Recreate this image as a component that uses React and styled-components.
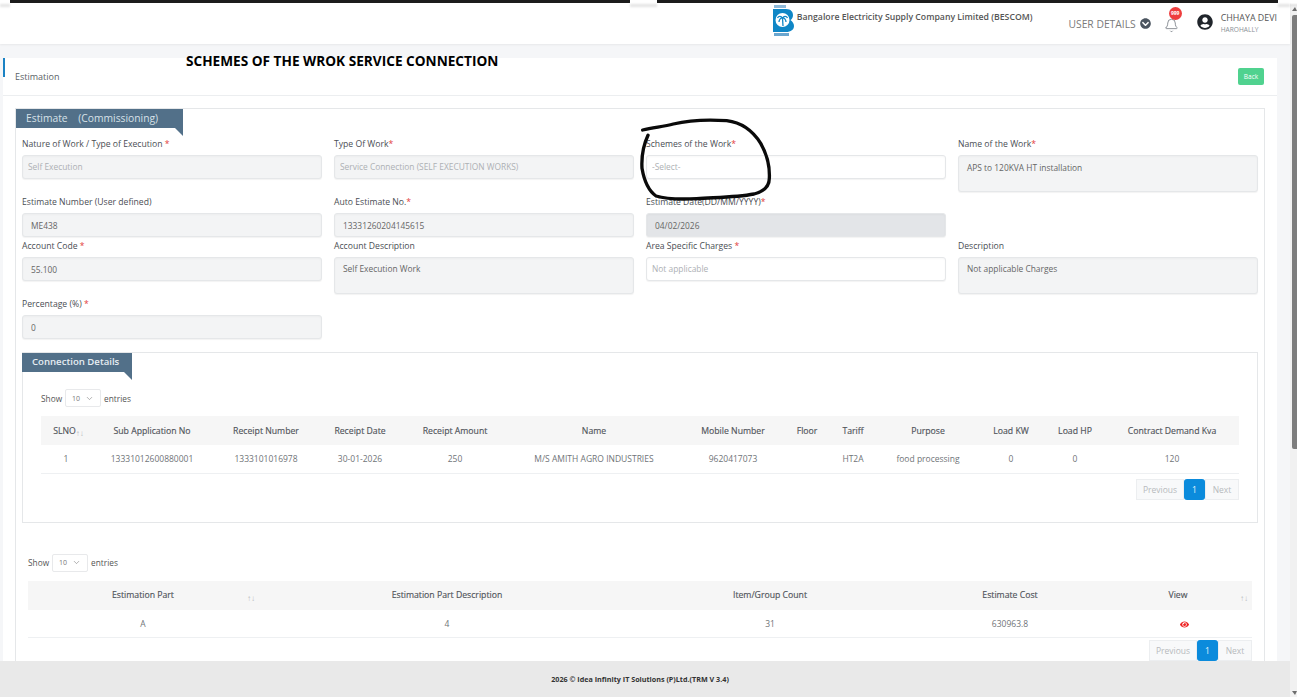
import styled, { createGlobalStyle } from 'styled-components';
import { Bell, ChevronDown } from 'lucide-react';
import { FaChevronCircleDown, FaEye, FaUserCircle } from 'react-icons/fa';

const GlobalStyle = createGlobalStyle`
	html, body {
		margin: 0;
		padding: 0;
		background: #fff;
		overflow: hidden;
	}
	* {
		box-sizing: border-box;
	}
	body {
		font-family: 'Open Sans', 'Noto Sans', 'Liberation Sans', sans-serif;
	}
`;

const Shell = styled.div`
	position: relative;
	display: flex;
	width: 1297px;
	height: 697px;
	overflow: hidden;
`;

const Content = styled.div`
	display: flex;
	flex-direction: column;
	width: 1290px;
	height: 100%;
`;

const Strip = styled.div`
	position: relative;
	z-index: 3;
	display: flex;
	flex: none;
	height: 3px;
	background: #1c1c1c;
`;

const StripGap = styled.div`
	position: relative;
	width: ${(p) => p.$w}px;
	margin-left: ${(p) => p.$left || 0}px;
	background: #fff;
	&::after {
		content: '';
		position: absolute;
		top: 4px;
		left: 0;
		width: 100%;
		height: 3px;
		background: #e4e4e4;
		filter: blur(1px);
	}
`;

const TopBar = styled.header`
	position: relative;
	z-index: 2;
	display: flex;
	flex: none;
	justify-content: flex-end;
	height: 41px;
	padding-right: 13px;
	background: #fff;
	box-shadow: 0 1px 2px rgba(0, 0, 0, 0.06);
`;

const Brand = styled.div`
	display: flex;
	align-items: flex-start;
	gap: 3px;
	margin-right: 36px;
	padding-top: 2px;
`;

const BrandName = styled.span`
	margin-top: 6px;
	font-size: 8.7px;
	font-weight: 600;
	line-height: 13px;
	color: #555;
	white-space: nowrap;
`;

const UserDetails = styled.div`
	display: flex;
	align-items: center;
	gap: 4px;
	height: 13px;
	margin-top: 14px;
	margin-right: 13px;
	font-size: 10.3px;
	color: #7a7a7a;
	svg {
		color: #4b5560;
	}
`;

const BellBox = styled.div`
	position: relative;
	width: 14px;
	height: 16px;
	margin-top: 13px;
	margin-right: 17px;
	color: #6a7078;
`;

const Badge = styled.span`
	position: absolute;
	top: -9px;
	left: 5px;
	width: 13px;
	height: 13px;
	border-radius: 50%;
	background: #ee3e3e;
	color: #fff;
	font-size: 5px;
	font-weight: 700;
	line-height: 13px;
	text-align: center;
`;

const Avatar = styled.div`
	display: flex;
	align-items: center;
	justify-content: center;
	width: 20px;
	height: 20px;
	margin-top: 9px;
	margin-right: 6px;
	border-radius: 50%;
	color: #20252b;
`;

const UserBlock = styled.div`
	padding-top: 8px;
`;

const UserName = styled.div`
	font-size: 8.9px;
	line-height: 13px;
	color: #555;
	white-space: nowrap;
`;

const UserPlace = styled.div`
	font-size: 6.6px;
	line-height: 11px;
	color: #8a8f96;
`;

const Main = styled.main`
	flex: 1;
	min-height: 0;
	padding: 14px 13px 0 3px;
	background: #f5f6f8;
	overflow: hidden;
`;

const Card = styled.section`
	position: relative;
	padding-bottom: 80px;
	background: #fff;
	&::before {
		content: '';
		position: absolute;
		top: 0;
		left: 0;
		width: 2px;
		height: 19px;
		background: #1a82c4;
	}
`;

const CardHead = styled.div`
	display: flex;
	align-items: flex-start;
	justify-content: space-between;
	height: 38px;
	padding: 10px 13px 0 12px;
	border-bottom: 1px solid #eceef0;
`;

const CardTitle = styled.h1`
	margin: 3px 0 0;
	font-size: 9px;
	font-weight: 400;
	line-height: 12px;
	color: #5a5f66;
`;

const BackButton = styled.button`
	width: 26px;
	height: 17px;
	padding: 0;
	border: none;
	border-radius: 2px;
	background: #50d28f;
	color: #fff;
	font-family: inherit;
	font-size: 6.5px;
`;

const Panel = styled.div`
	margin: 12px 12px 0;
	padding: 0 6px;
	border: 1px solid #e5e7e9;
`;

const Tag = styled.div`
	position: relative;
	width: ${(p) => p.$w}px;
	height: 19px;
	margin-left: ${(p) => p.$left}px;
	padding-left: ${(p) => p.$pad}px;
	background: #527089;
	color: ${(p) => p.$color};
	font-size: ${(p) => p.$size}px;
	font-weight: ${(p) => p.$weight};
	line-height: ${(p) => p.$line}px;
	white-space: pre;
	&::after {
		content: '';
		position: absolute;
		top: 19px;
		right: 0;
		border-top: 8px solid #527089;
		border-left: 8px solid transparent;
	}
`;

const FormGrid = styled.div`
	display: grid;
	grid-template-columns: repeat(4, 300px);
	align-items: start;
	column-gap: 12px;
	row-gap: 3px;
	margin-top: 9px;
`;

const Field = styled.div`
	display: flex;
	flex-direction: column;
	gap: ${(p) => (p.$tight ? 5 : 6)}px;
`;

const Label = styled.label`
	height: 12px;
	font-size: 8.65px;
	line-height: ${(p) => (p.$high ? 12 : 14)}px;
	color: #4a4e54;
	white-space: nowrap;
	b {
		font-weight: 400;
		color: #e23c3c;
	}
`;

const controlStyles = `
	width: 100%;
	border: 1px solid #e5e7e9;
	border-radius: 3px;
	font-family: inherit;
	font-size: 8.4px;
	outline: none;
	box-shadow: inset 0 1px 2px rgba(0, 0, 0, 0.03), 0 1px 1px rgba(0, 0, 0, 0.05);
`;

const Control = styled.input`
	${controlStyles}
	height: 24px;
	padding: 0 6px ${(p) => (p.$dark ? 0 : 2)}px ${(p) => (p.$dark ? 8 : 5)}px;
	background: ${(p) => (p.$plain ? '#fff' : p.$locked ? '#e3e5e8' : '#f3f4f5')};
	color: ${(p) => (p.$dark ? '#666' : '#adb0b4')};
`;

const TextBox = styled.textarea`
	${controlStyles}
	display: block;
	height: 37px;
	padding: ${(p) => (p.$high ? 5 : 6)}px 8px 0;
	background: #f3f4f5;
	color: #666;
	line-height: 12px;
	resize: none;
`;

const SubPanel = styled.div`
	margin: 13px 0 0;
	padding: 0 18px 22px;
	border: 1px solid #e5e7e9;
`;

const ShowRow = styled.div`
	display: flex;
	align-items: center;
	gap: 3px;
	height: 18px;
	margin-top: ${(p) => p.$top}px;
	margin-bottom: 9px;
	font-size: 8.3px;
	color: #555;
`;

const PageSize = styled.div`
	display: flex;
	align-items: center;
	justify-content: space-between;
	width: 36px;
	height: 18px;
	padding: 0 6px;
	border: 1px solid #e8e9eb;
	border-radius: 2px;
	font-size: 7px;
	color: #777;
`;

const Table = styled.table`
	width: 100%;
	border-collapse: collapse;
	table-layout: fixed;
`;

const HeadCell = styled.th`
	position: relative;
	height: 29px;
	padding: 0 ${(p) => p.$padRight || 0}px 0 ${(p) => p.$padLeft || 0}px;
	background: #f6f6f6;
	font-size: 8.7px;
	font-weight: 400;
	color: #50545a;
	text-align: center;
	-webkit-text-stroke: 0.15px #50545a;
	white-space: nowrap;
`;

const Cell = styled.td`
	height: 28px;
	padding: 0;
	border-bottom: 1px solid #eef0f2;
	font-size: 8.5px;
	color: #707478;
	text-align: center;
	white-space: nowrap;
`;

const SortMark = styled.span`
	position: relative;
	top: 2px;
	font-size: 8px;
	color: #b9bcbf;
	-webkit-text-stroke: 0;
`;

const SortCorner = styled(SortMark)`
	position: absolute;
	top: 11px;
	right: ${(p) => p.$right}px;
`;

const EyeIcon = styled(FaEye)`
	color: #ee2222;
	vertical-align: middle;
`;

const Pager = styled.div`
	display: flex;
	justify-content: flex-end;
	margin-top: ${(p) => p.$top}px;
`;

const PagerEnd = styled.span`
	display: flex;
	align-items: center;
	justify-content: center;
	width: ${(p) => p.$w}px;
	height: 21px;
	border: 1px solid #eceef0;
	background: #f8f9fa;
	font-size: 8.5px;
	color: #b7babd;
`;

const PagerCurrent = styled.span`
	display: flex;
	align-items: center;
	justify-content: center;
	width: 21px;
	height: 21px;
	border-radius: 3px;
	background: #0b8bdc;
	color: #e6f3fb;
	font-size: 8.5px;
`;

const LowerBlock = styled.div`
	padding: 0 6px;
`;

const Footer = styled.footer`
	position: relative;
	z-index: 2;
	flex: none;
	height: 36px;
	padding-right: 10px;
	background: #e9e9e9;
	font-size: 7.2px;
	font-weight: 700;
	line-height: 36px;
	color: #333;
	text-align: center;
`;

const ScrollTrack = styled.div`
	position: relative;
	width: 7px;
	height: 100%;
	background: linear-gradient(#fff 0, #fff 3px, #e4e4e4 5px, #f1f1f1 8px);
`;

const ScrollThumb = styled.div`
	position: absolute;
	top: 15px;
	left: 2px;
	width: 5px;
	height: 434px;
	border-radius: 2px 0 0 2px;
	background: #7d7d7d;
`;

const ScrollArrow = styled.div`
	position: absolute;
	left: 2px;
	${(p) => (p.$down ? 'bottom: 2px;' : 'top: 7px;')}
	border-left: 3px solid transparent;
	border-right: 2px solid transparent;
	${(p) => (p.$down ? 'border-top' : 'border-bottom')}: 4px solid #6d6d6d;
`;

const Annotation = styled.div`
	position: absolute;
	top: 52px;
	left: 186px;
	z-index: 3;
	font-size: 13.64px;
	font-weight: 700;
	line-height: 18px;
	color: #000;
	white-space: nowrap;
`;

const InkCircle = styled.svg`
	position: absolute;
	top: 110px;
	left: 630px;
	z-index: 3;
	pointer-events: none;
`;

function Logo() {
	return (
		<svg width="21" height="32" viewBox="0 0 21 32">
			<rect x="1" y="0" width="12" height="3" fill="#8fb9d8" />
			<path
				d="M0 4 H13 C18 4 20 7 20 10 C20 12.5 19 14 17.5 15 C19.5 16.5 21 18.5 21 21 C21 24.5 18 27 13 27 H0 Z"
				fill="#0f86c6"
			/>
			<circle cx="9.5" cy="15" r="7" fill="#fff" />
			<path
				d="M10 21 L9.5 13 M9.5 13 C8 10.5 5.5 11 4.5 13 M9.5 13 C11 10.5 13.5 11 14.5 13 M9.5 13 C8 12.5 6 14.5 6 17 M9.5 13 C11 12.5 13 14.5 13 17"
				stroke="#0f86c6"
				strokeWidth="1.3"
				fill="none"
			/>
			<rect x="1" y="28" width="15" height="3" fill="#6aa6cf" />
		</svg>
	);
}

const connectionCols = [50, 122, 106, 82, 108, 170, 108, 40, 52, 98, 68, 60, 134];
const connectionHeads = [
	'SLNO',
	'Sub Application No',
	'Receipt Number',
	'Receipt Date',
	'Receipt Amount',
	'Name',
	'Mobile Number',
	'Floor',
	'Tariff',
	'Purpose',
	'Load KW',
	'Load HP',
	'Contract Demand Kva',
];
const connectionRow = [
	'1',
	'13331012600880001',
	'1333101016978',
	'30-01-2026',
	'250',
	'M/S AMITH AGRO INDUSTRIES',
	'9620417073',
	'',
	'HT2A',
	'food processing',
	'0',
	'0',
	'120',
];

const partCols = [230, 378, 268, 212, 136];

function Entries({ top }) {
	return (
		<ShowRow $top={top}>
			Show
			<PageSize>
				10 <ChevronDown size={9} strokeWidth={1.5} />
			</PageSize>
			entries
		</ShowRow>
	);
}

function Pagination({ top }) {
	return (
		<Pager $top={top}>
			<PagerEnd $w={48}>Previous</PagerEnd>
			<PagerCurrent>1</PagerCurrent>
			<PagerEnd $w={34}>Next</PagerEnd>
		</Pager>
	);
}

export default function App() {
	return (
		<Shell>
			<GlobalStyle />
			<Content>
				<Strip>
					<StripGap $w={10} />
					<StripGap $w={27} $left={620} />
					<StripGap $w={12} $left={621} />
				</Strip>
				<TopBar>
					<Brand>
						<Logo />
						<BrandName>Bangalore Electricity Supply Company Limited (BESCOM)</BrandName>
					</Brand>
					<UserDetails>
						USER DETAILS <FaChevronCircleDown size={11} />
					</UserDetails>
					<BellBox>
						<Bell size={15} strokeWidth={1.2} />
						<Badge>999</Badge>
					</BellBox>
					<Avatar>
						<FaUserCircle size={16} />
					</Avatar>
					<UserBlock>
						<UserName>CHHAYA DEVI</UserName>
						<UserPlace>HAROHALLY</UserPlace>
					</UserBlock>
				</TopBar>
				<Main>
					<Card>
						<CardHead>
							<CardTitle>Estimation</CardTitle>
							<BackButton>Back</BackButton>
						</CardHead>
						<Panel>
							<Tag $w={167} $left={-6} $pad={10} $size={10.3} $weight={400} $line={19} $color="#d7e1e8">
								{'Estimate    (Commissioning)'}
							</Tag>
							<FormGrid>
								<Field>
									<Label>Nature of Work / Type of Execution <b>*</b></Label>
									<Control readOnly value="Self Execution" />
								</Field>
								<Field>
									<Label>Type Of Work<b>*</b></Label>
									<Control readOnly value="Service Connection (SELF EXECUTION WORKS)" />
								</Field>
								<Field>
									<Label>Schemes of the Work<b>*</b></Label>
									<Control readOnly $plain value="-Select-" />
								</Field>
								<Field>
									<Label>Name of the Work<b>*</b></Label>
									<TextBox readOnly value="APS to 120KVA HT installation" />
								</Field>

								<Field>
									<Label>Estimate Number (User defined)</Label>
									<Control readOnly $dark value="ME438" />
								</Field>
								<Field>
									<Label>Auto Estimate No.<b>*</b></Label>
									<Control readOnly $dark value="13331260204145615" />
								</Field>
								<Field>
									<Label>Estimate Date(DD/MM/YYYY)<b>*</b></Label>
									<Control readOnly $dark $locked value="04/02/2026" />
								</Field>
								<div />

								<Field $tight>
									<Label $high>Account Code <b>*</b></Label>
									<Control readOnly $dark value="55.100" />
								</Field>
								<Field $tight>
									<Label $high>Account Description</Label>
									<TextBox readOnly $high value="Self Execution Work" />
								</Field>
								<Field $tight>
									<Label $high>Area Specific Charges <b>*</b></Label>
									<Control readOnly $plain value="Not applicable" />
								</Field>
								<Field $tight>
									<Label $high>Description</Label>
									<TextBox readOnly $high value="Not applicable Charges" />
								</Field>

								<Field>
									<Label>Percentage (%) <b>*</b></Label>
									<Control readOnly $dark value="0" />
								</Field>
							</FormGrid>

							<SubPanel>
								<Tag $w={110} $left={-19} $pad={10} $size={9.6} $weight={600} $line={17} $color="#e6edf2">
									Connection Details
								</Tag>
								<Entries top={17} />
								<Table>
									<colgroup>
										{connectionCols.map((w, i) => (
											<col key={i} width={w} />
										))}
									</colgroup>
									<thead>
										<tr>
											{connectionHeads.map((h, i) => (
												<HeadCell key={h} $padLeft={i === 0 ? 5 : 0}>
													{h}
													{i === 0 && <SortMark>↑↓</SortMark>}
												</HeadCell>
											))}
										</tr>
									</thead>
									<tbody>
										<tr>
											{connectionRow.map((v, i) => (
												<Cell key={i}>{v}</Cell>
											))}
										</tr>
									</tbody>
								</Table>
								<Pagination top={5} />
							</SubPanel>

							<LowerBlock>
								<Entries top={31} />
								<Table>
									<colgroup>
										{partCols.map((w, i) => (
											<col key={i} width={w} />
										))}
									</colgroup>
									<thead>
										<tr>
											<HeadCell>
												Estimation Part
												<SortCorner $right={3}>↑↓</SortCorner>
											</HeadCell>
											<HeadCell>Estimation Part Description</HeadCell>
											<HeadCell>Item/Group Count</HeadCell>
											<HeadCell>Estimate Cost</HeadCell>
											<HeadCell $padRight={12}>
												View
												<SortCorner $right={4}>↑↓</SortCorner>
											</HeadCell>
										</tr>
									</thead>
									<tbody>
										<tr>
											<Cell>A</Cell>
											<Cell>4</Cell>
											<Cell>31</Cell>
											<Cell>630963.8</Cell>
											<Cell>
												<EyeIcon size={9} />
											</Cell>
										</tr>
									</tbody>
								</Table>
								<Pagination top={2} />
							</LowerBlock>
						</Panel>
					</Card>
				</Main>
				<Footer>2026 © Idea Infinity IT Solutions (P)Ltd.(TRM V 3.4)</Footer>
			</Content>
			<ScrollTrack>
				<ScrollArrow />
				<ScrollThumb />
				<ScrollArrow $down />
			</ScrollTrack>
			<Annotation>SCHEMES OF THE WROK SERVICE CONNECTION</Annotation>
			<InkCircle width="340" height="190" viewBox="0 0 1020 570" fill="none">
				<path
					d="M38 60 C70 52 100 50 130 42 C180 30 230 28 290 32 C340 38 370 65 392 100 C412 135 420 165 418 205 C418 232 400 245 372 252 C320 262 260 262 200 266 C160 268 110 268 78 258 C52 240 42 210 36 175 C34 140 38 110 54 76"
					stroke="#0a0a0a"
					strokeWidth="10"
					strokeLinecap="round"
					strokeLinejoin="round"
				/>
			</InkCircle>
		</Shell>
	);
}
